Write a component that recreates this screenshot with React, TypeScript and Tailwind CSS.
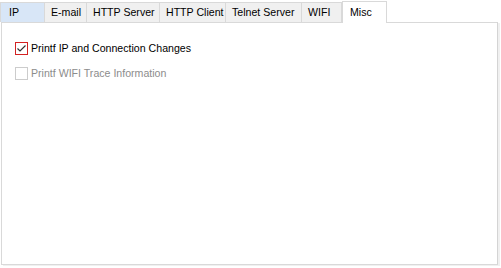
import React from "react";

const tabs = [
  { label: "IP", w: 45 },
  { label: "E-mail", w: 42 },
  { label: "HTTP Server", w: 73 },
  { label: "HTTP Client", w: 66 },
  { label: "Telnet Server", w: 76 },
  { label: "WIFI", w: 40 },
];

export default function App() {
  return (
    <div className="w-[501px] h-[268px] bg-white text-[10.6px] text-black" style={{ fontFamily: '"Liberation Sans", Arial, sans-serif' }}>
      <div className="flex h-[22px] items-end">
        {tabs.map((t, i) => (
          <div
            key={t.label}
            className={`shrink-0 whitespace-nowrap h-[20px] border-t border-r border-[#d9d9d9] ${i === 0 ? "bg-[#d8e6f7] border-l pl-[8px]" : "bg-[#f0f0f0] pl-[6px]"} flex items-center leading-none`}
            style={{ width: t.w }}
          >
            {t.label}
          </div>
        ))}
        <div className="shrink-0 whitespace-nowrap relative z-10 -mb-px h-[22px] w-[45px] bg-white border-t border-l border-r border-[#d9d9d9] pl-[7px] pt-[5px] leading-none">
          Misc
        </div>
      </div>
      <div className="ml-px w-[497px] h-[243px] border border-[#d9d9d9] border-r-[#d4d4d4] bg-white shadow-[2px_1px_0_#f0f0f0] pl-[13px] pt-[18px]">
        <label className="flex items-center h-[14px] gap-[3px] whitespace-nowrap">
          <span className="shrink-0 w-[13px] h-[13px] border border-[#d32222] bg-white flex items-center justify-center">
            <svg width="11" height="11" viewBox="0 0 11 11">
              <path d="M1.5 5.5 L4 8 L9.5 2.5" fill="none" stroke="#333" strokeWidth="1.2" />
            </svg>
          </span>
          <span className="leading-none">Printf IP and Connection Changes</span>
        </label>
        <label className="flex items-center h-[14px] gap-[3px] mt-[11px] text-[#8c8c8c] whitespace-nowrap">
          <span className="shrink-0 w-[13px] h-[13px] border border-[#cccccc] bg-white" />
          <span className="leading-none">Printf WIFI Trace Information</span>
        </label>
      </div>
    </div>
  );
}
